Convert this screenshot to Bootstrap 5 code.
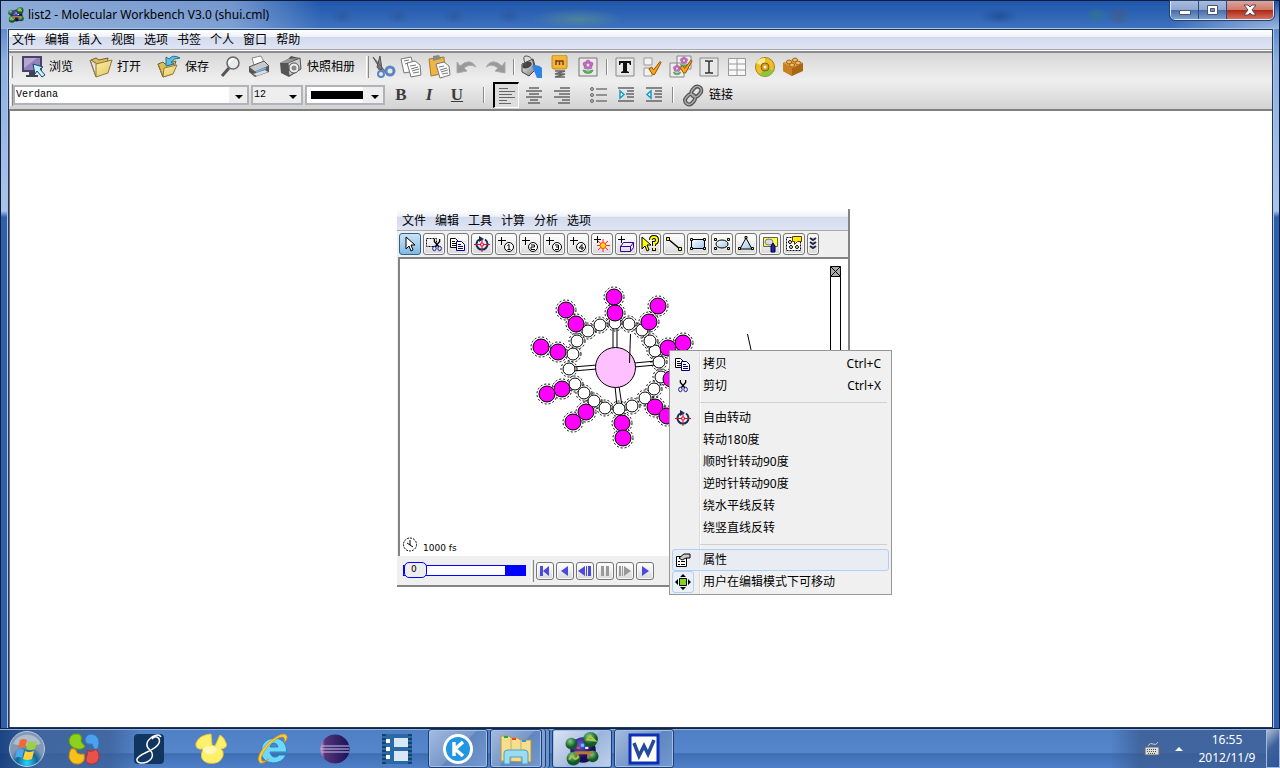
<!DOCTYPE html>
<html lang="zh-CN">
<head>
<meta charset="utf-8">
<meta name="viewport" content="width=device-width, initial-scale=1">
<title>list2 - Molecular Workbench V3.0 (shui.cml)</title>
<link href="https://cdn.jsdelivr.net/npm/bootstrap@5.3.0/dist/css/bootstrap.min.css" rel="stylesheet">
<style>
body{font:12px/16px "Noto Sans","Noto Sans CJK SC",sans-serif;color:#000;background:#2f62ae}
svg{display:block;flex:none}
a{color:#000;text-decoration:none}
button{font:inherit;color:#000;padding:0;border:0;background:none}
/* window frame */
.frame{background:linear-gradient(#3a6cb8 0,#8eb0e0 60px,#a9c4ea 210px,#2d60ac 216px,#2d60ac 100%);padding:0 6px 0 7px;border:solid #0b1a38;border-width:1px 1px 0}
.caption-bar{height:28px;margin:0 -6px 0 -7px;padding:0 5px 0 7px;
 background:
 radial-gradient(ellipse 12px 8px at 341px 15px,#2a5597aa,transparent),
 radial-gradient(ellipse 12px 8px at 397px 15px,#2a5597aa,transparent),
 radial-gradient(ellipse 12px 8px at 453px 15px,#2a5597aa,transparent),
 radial-gradient(ellipse 12px 8px at 508px 15px,#2a5597aa,transparent),
 radial-gradient(ellipse 46px 10px at 577px 18px,#5a8f8faa,transparent),
 radial-gradient(ellipse 20px 8px at 998px 15px,#1f4a90bb,transparent),
 radial-gradient(ellipse 12px 8px at 1096px 14px,#2f7a80aa,transparent),
 radial-gradient(ellipse 12px 10px at 1118px 15px,#4a5a78aa,transparent),
 radial-gradient(ellipse 110px 26px at 100% 100%,#9bb6df,transparent),
 linear-gradient(90deg,#a9c0e2cc 0,#a9c0e299 230px,transparent 320px),
 linear-gradient(#1f57ad,#3f72be)}
.client{border:1px solid #22375c;box-shadow:0 0 0 1px #a9c6ea}
.win-ctl{height:19px;border:1px solid #dfe8f5;border-top:0;border-radius:0 0 5px 5px;outline:1px solid #283f66;overflow:hidden}
.win-ctl button{width:28px;border-right:1px solid #2f4a78;background:linear-gradient(#a9bddd,#8ea8d2 48%,#486ea9 52%,#7d9fd0);display:flex;align-items:center;justify-content:center}
.win-ctl .x-btn{width:46px;border:0;background:linear-gradient(#dfa59b,#cf7a6c 48%,#ab2a16 52%,#d4705c)}
/* menus and tool bars */
.menu-strip{background:linear-gradient(#fff,#eef2f8 35%,#d3daed 38%,#dfe5f4)}
.app-menu{height:20px;padding:0 3px;gap:9px;border-bottom:1px solid #a8a8a8}
.tools{background:linear-gradient(#d8d8d8,#efefef 50%,#d3d3d3);border-top:2px solid #8c8c8c;border-bottom:2px solid #808080;padding:0 1px;margin-top:1px}
.tool-row{height:28px}
.grip{width:3px;height:22px;border-right:1px solid #888;border-left:1px solid #fff;background:#e0e0e0;flex:none}
.divide{width:9px;height:16px;flex:none;background:linear-gradient(90deg,transparent 4px,#8a8a8a 4px,#8a8a8a 5px,#fff 5px,#fff 6px,transparent 6px)}
.tool-row button{width:28px;height:26px;display:flex;align-items:center;justify-content:center;flex:none}
.tool-row .wide{width:auto;justify-content:flex-start;gap:4px;padding:0 8px 0 4px;white-space:nowrap}
.tool-row .album{padding:0 11px 0 6px}
.tool-row .letter{font:bold 17px "Liberation Serif",serif;color:#3c3c3c}
.tool-row .pressed{width:26px;margin:0 1px;border:1px solid #fff;border-top:2px solid #000;border-left:2px solid #000;background:#dedede}
.combo{height:20px;border:2px solid #b0b3b8;padding:0 0 0 1px;color:#000;font:10px/16px "Liberation Mono",monospace;appearance:none;border-radius:0;margin-right:2px;
 background:url("data:image/svg+xml,%3Csvg xmlns='http://www.w3.org/2000/svg' width='18' height='16'%3E%3Cpath fill='%23eee' d='M0 0h18v16H0z'/%3E%3Cpath d='M6 8h8l-4 4z'/%3E%3C/svg%3E") right center no-repeat,#fff}
.combo.face{width:236px}.combo.size{width:52px}
.combo.shade{width:80px;background:url("data:image/svg+xml,%3Csvg xmlns='http://www.w3.org/2000/svg' width='20' height='16'%3E%3Cpath fill='%23eee' d='M0 0h20v16H0z'/%3E%3Cpath d='M8 8h8l-4 4z'/%3E%3C/svg%3E") right center no-repeat,linear-gradient(#000,#000) 4px 4px/52px 8px no-repeat,#fff}
.combo.size{background-color:#eee}
/* document and embedded model */
.page-area{border-left:1px solid #777;background:#fff;padding:98px 0 0 387px}
.model{width:453px;border-right:2px solid #848484;border-bottom:2px solid #848484;background:#efefef;position:relative}
.model-menu{height:22px;padding:2px 5px 0;gap:9px;border-bottom:1px solid #aaa}
.model-tools{height:26px;padding:0 2px;gap:2px}
.model-tools button{width:22px;height:22px}
.key,.model-tools button{border:1px solid #777;border-radius:3px;background:linear-gradient(#fff,#eee 50%,#d9d9d9);box-shadow:inset 0 0 0 1px #f8f8f8;display:flex;align-items:center;justify-content:center;flex:none}
.model-tools button.chosen{background:linear-gradient(#c9e3f5,#a6d0ee 50%,#7fb9e2);border-color:#2c628b;box-shadow:none}
.model-tools button.more{width:12px}
.scene{background:#fff;border-top:2px solid #848484;border-left:2px solid #848484;margin-left:1px}
.player{height:29px;padding:0 6px;gap:2px}
.key{width:18px;height:18px}
.seek{width:123px;height:17px;position:relative;margin-right:3px}
.seek input{appearance:none;display:block;width:100%;height:17px;margin:0;background:linear-gradient(90deg,#fff 83%,#00f 83%) center/100% 10px no-repeat}
.seek input::-webkit-slider-runnable-track{height:11px;border:1px solid #00f}
.seek input::-webkit-slider-thumb{appearance:none;width:23px;height:16px;margin-top:-4px;border:1px solid #00f;border-radius:5px;background:#eee}
.seek output{position:absolute;left:8px;top:0;font:9px/15px "DejaVu Sans",sans-serif;pointer-events:none}
.scene text{font:9px "DejaVu Sans",sans-serif}
/* context menu */
.popup{position:absolute;left:272px;top:141px;width:223px;padding:2px 2px 1px;background:linear-gradient(90deg,#efefef 29px,#dcdcdc 29px,#dcdcdc 30px,#fff 30px,#fff 31px,#f0f0f0 31px);border:1px solid #979797;z-index:2}
.popup button{display:flex;align-items:center;width:100%;height:22px;text-align:left;border:1px solid transparent;padding-right:7px;border-radius:3px}
.popup .pic{width:20px;height:20px;display:flex;align-items:center;justify-content:center;margin-right:10px}
.popup .hot{border-color:#aecff7;background:#e6ecf5aa}
.popup .ticked .pic{outline:1px solid #aecff7;border-radius:2px;background:#e9f0f8}
.popup hr{margin:5px 2px 4px 28px;border-top:1px solid #d0d0d0;opacity:1}
/* task bar */
.taskbar{height:40px;border-top:1px solid #14233f;box-shadow:inset 0 1px #8fb2e2;
 background:linear-gradient(90deg,#0d3470cc 0,#3a5c90bb 40px,#3a5c90aa 110px,transparent 140px,transparent calc(100% - 170px),#38578aaa calc(100% - 140px),#38578aaa),linear-gradient(#4f80c5,#5586cb 60%,#3e6db1 64%,#4677bf 80%,#4f80c5)}
.taskbar button{height:39px;display:flex;align-items:center;justify-content:center;flex:none}
.pin{width:62px}
.first-pin{margin-left:10px}
.taskbar .task{width:60px;margin-right:2px;border:1px solid #1f3f74;border-radius:3px;box-shadow:inset 0 0 0 1px #a5c0e6;background:linear-gradient(135deg,#a3bce0,#7898c9 50%,#5f86bf 52%,#7599d0)}
.taskbar .task.front{background:linear-gradient(135deg,#dbe5f4,#aabfdf 50%,#9ab3da 52%,#c0d2ec)}
.taskbar .task.stack{width:52px;margin-right:10px;box-shadow:inset 0 0 0 1px #a5c0e6,3px 0 #7ea0d4,4px 0 #1f3f74,7px 0 #6e94cc,8px 0 #1f3f74}
.tray-arrow{width:27px;padding-left:9px}
.clock{color:#fff;line-height:18px;text-align:center;width:78px}
.taskbar .peek{width:14px;border:1px solid #9fb9de;background:linear-gradient(135deg,#aebed8,#40619a 45%,#2c5399)}
</style>
</head>
<body class="vh-100 d-flex flex-column overflow-hidden">
<svg width="0" height="0" class="position-absolute" aria-hidden="true">
<defs>
<linearGradient id="gold" x2="1" y2="1"><stop stop-color="#fff7b8"/><stop offset="1" stop-color="#e3c35c"/></linearGradient>
<linearGradient id="sky" x2="1" y2="1"><stop stop-color="#fff"/><stop offset="1" stop-color="#9cc5ea"/></linearGradient>
<linearGradient id="steel" y2="1" x2="1"><stop stop-color="#f4f4f4"/><stop offset="1" stop-color="#777"/></linearGradient>
<radialGradient id="ball" cx=".4" cy=".3"><stop stop-color="#82d286"/><stop offset="1" stop-color="#14572a"/></radialGradient>
<radialGradient id="nucleus" cx=".4" cy=".3"><stop stop-color="#6b58d8"/><stop offset="1" stop-color="#180c58"/></radialGradient>
<symbol id="molecule" viewBox="0 0 32 32"><circle cx="17" cy="17" r="12" fill="url(#nucleus)"/><circle cx="24" cy="7" r="7" fill="url(#ball)"/><circle cx="6" cy="11" r="5.500" fill="url(#ball)"/><circle cx="8" cy="25" r="6.500" fill="url(#ball)"/><circle cx="26" cy="23" r="5.500" fill="url(#ball)"/><path d="M9 18h17v3h-3v4h-2v-4h-8v3h-2v-3H9z" fill="#b4793b"/><path d="M11 14h3v2h-3z" fill="#e64a4a"/><path d="M15 11h3v3h-3z" fill="#55c8ee"/><path d="M19 14h3v2h-3z" fill="#eee"/><path d="M4 26q2-5 4-2t5-1M21 7l3-3 4 4z" stroke="#a9c645" stroke-width="2" fill="none"/></symbol>
<symbol id="tick" viewBox="0 0 16 16"><path d="M2 9l3-2 2 3 7-9 1 1L8 15H6z" fill="#ffa415" stroke="#8a4d00"/></symbol>
<symbol id="flower" viewBox="0 0 16 16"><g fill="#c66bc4" stroke="#974f98" stroke-width=".5"><circle cx="8" cy="3" r="2"/><circle cx="11" cy="5" r="2"/><circle cx="10" cy="8" r="2"/><circle cx="6" cy="8" r="2"/><circle cx="5" cy="5" r="2"/></g><circle cx="8" cy="6" r="1.500" fill="#f4d6f2"/><path d="M8 9v6M8 14q-4 1-5-3 4 0 5 3q1-3 5-3-1 4-5 3" fill="#57a860" stroke="#57a860"/></symbol>
<symbol id="pages" viewBox="0 0 16 16"><path d="M.5 2.500h5l3 3v6h-8z" fill="#fff" stroke="#000"/><path d="M2 5.500h3m-3 2h4m-4 2h4" stroke="#000"/><path d="M6.500 5.500h5l3 3v6h-8z" fill="#fff" stroke="#000080"/><path d="M8 8.500h3m-3 2h5m-5 2h5" stroke="#000080"/></symbol>
<symbol id="snip" viewBox="0 0 16 16"><path d="M5 1v3l5 6M11 1v3L6 10" stroke="#000" stroke-width="1.500" fill="none"/><ellipse cx="5" cy="12" rx="2" ry="2.500" fill="none" stroke="#00008b"/><ellipse cx="11" cy="12" rx="2" ry="2.500" fill="none" stroke="#00008b"/></symbol>
<symbol id="spin" viewBox="0 0 16 16"><path d="M11 3.500a5.500 5.500 0 1 1-6 0" fill="none" stroke="#0b2f5c" stroke-width="2"/><path d="M5 0l5 3-5 3z" fill="#0b2f5c"/><path d="M8 3v13M0 8.500h16" stroke="#e8002a" stroke-width="1"/><circle cx="8" cy="8.500" r="2" fill="#e8002a"/><circle cx="8" cy="8.500" r="1" fill="#fff"/></symbol>
</defs></svg>

<main class="frame flex-grow-1 d-flex flex-column">
<header class="caption-bar d-flex align-items-center flex-shrink-0">
<svg width="16" height="16"><use href="#molecule"/></svg>
<span class="ms-1">list2 - Molecular Workbench V3.0 (shui.cml)</span>
<div class="win-ctl d-flex ms-auto align-self-start">
<button aria-label="最小化"><svg width="14" height="12"><path d="M1.500 6.500h11v4h-11z" fill="#fff" stroke="#4a5568"/></svg></button>
<button aria-label="最大化"><svg width="13" height="12"><path d="M1.500 1.500h10v9h-10z" fill="#fff" stroke="#4a5568"/><path d="M4.500 4.500h4v3h-4z" fill="#7895c4" stroke="#4a5568"/></svg></button>
<button class="x-btn" aria-label="关闭"><svg width="14" height="12"><path d="M1 1h4l2 2 2-2h4L9 6l4 5H9L7 9l-2 2H1l4-5z" fill="#fff" stroke="#594552"/></svg></button>
</div>
</header>

<div class="client flex-grow-1 d-flex flex-column bg-white">
<nav class="menu-strip app-menu d-flex align-items-center"><a href="#">文件</a><a href="#">编辑</a><a href="#">插入</a><a href="#">视图</a><a href="#">选项</a><a href="#">书签</a><a href="#">个人</a><a href="#">窗口</a><a href="#">帮助</a></nav>
<div class="tools">
<div class="tool-row d-flex align-items-center">
<span class="grip me-1"></span>
<button class="wide me-1"><svg width="24" height="24"><path d="M1 1h20v16H1z" fill="#49416a"/><path d="M3 3h16v12H3z" fill="#9382b8"/><path d="M3 3h13L3 13z" fill="#b5a7d2"/><path d="M8 17h6v3h3v2H5v-2h3z" fill="#3e4256"/><path d="M12 9l10 3-3 2 5 6-3 2-5-6-2 3z" fill="#c4efff" stroke="#164766"/></svg>浏览</button>
<button class="wide me-1"><svg width="24" height="24"><path d="M2 5l5-2 3 2 9-2-2 12z" fill="#e0bd5b" stroke="#706130"/><path d="M1 5l6 17V9l16-4-4 13-12 4z" fill="url(#gold)" stroke="#8f7a3c"/></svg>打开</button>
<button class="wide"><svg width="24" height="24"><path d="M1 9l5-2 2 2 11-3-4 13-9 3z" fill="#e0bd5b" stroke="#706130"/><path d="M1 9l5 13 1-9 13-3-4 9-10 3z" fill="url(#gold)" stroke="#8f7a3c"/><path d="M23 3Q16-1 12 4L9 2v9l8-2-3-2q3-4 9-4z" fill="#62bde4" stroke="#237193"/></svg>保存</button>
<button aria-label="查找"><svg width="24" height="24"><path d="M10 13l-7 8" stroke="#555" stroke-width="3"/><circle cx="14" cy="8" r="6" fill="#e6edf1" stroke="#666" stroke-width="1.500"/><path d="M10 8q1-4 5-4" stroke="#fff" stroke-width="2" fill="none"/></svg></button>
<button aria-label="打印"><svg width="24" height="24"><path d="M7 10L5 3l9-2 4 8z" fill="#fff" stroke="#888"/><path d="M2 12l15-6 5 5v6L8 22l-6-5z" fill="#555"/><path d="M2 12l15-6 5 5-14 6z" fill="#c9c9c9" stroke="#555"/><path d="M9 17l10-4" stroke="#6ab0de" stroke-width="2"/><path d="M6 19l12-4 3 2-11 4z" fill="#ddd"/></svg></button>
<button class="wide album"><svg width="24" height="24"><path d="M1 8l8-4 3-3 4 1 5 1 1 11L10 22 2 18z" fill="#555"/><path d="M9 8l12-5 1 11-12 7z" fill="#ccc" stroke="#555"/><path d="M1 8l8-4 10-1L9 8z" fill="#999"/><circle cx="15" cy="13" r="5" fill="#eee" stroke="#555"/><circle cx="15" cy="13" r="2.500" fill="#888"/></svg>快照相册</button>
<span class="grip"></span>
<button aria-label="剪切"><svg width="26" height="24"><path d="M3 2l12 14-3 1zM10 1l2 13-2 2-3-4z" fill="#888" stroke="#555"/><circle cx="11" cy="19" r="3" fill="none" stroke="#5d86c4" stroke-width="2"/><circle cx="20" cy="16" r="4" fill="none" stroke="#5d86c4" stroke-width="3"/></svg></button>
<button aria-label="复制"><svg width="24" height="24"><path d="M2 4l10-2 4 14-11 2z" fill="#fff" stroke="#777"/><path d="M8 8l8-2 5 4 1 10-10 2z" fill="#fff" stroke="#777"/><path d="M5 6l5-1M6 9l3-1M11 11l6-1m-5 4l7-2m-6 4l7-2m-6 4l6-1" stroke="#777"/></svg></button>
<button aria-label="粘贴"><svg width="24" height="24"><path d="M2 4l15-2 1 16-14 3z" fill="#f0b548" stroke="#ac7824"/><path d="M6 1l6-1 2 4-8 2z" fill="#888"/><path d="M9 9l8-2 5 4 1 9-10 3z" fill="#fff" stroke="#777"/><path d="M12 12l5-1m-4 4l7-2m-6 4l7-2m-6 4l6-1" stroke="#777"/></svg></button>
<button aria-label="撤消"><svg width="22" height="18"><path d="M1 4v11l10-2-3-3q6-5 12-1Q14-1 4 8z" fill="#999" stroke="#aaa"/></svg></button>
<button aria-label="重做"><svg width="22" height="18"><path d="M21 4v11l-10-2 3-3Q8 5 2 9 8-1 18 8z" fill="#999" stroke="#aaa"/></svg></button>
<span class="divide"></span>
<button aria-label="填充颜色"><svg width="26" height="24"><path d="M3 9l11-5 3 10-7 7-7-4z" fill="url(#steel)" stroke="#444"/><ellipse cx="8" cy="10" rx="5" ry="3" transform="rotate(-25 8 10)" fill="#444"/><path d="M7 10Q2 0 8 1t7 10" fill="none" stroke="#555"/><path d="M13 11q7-2 10 2v10h-5z" fill="#2d84e4"/></svg></button>
<button aria-label="模型"><svg width="20" height="24"><rect x="2" y="0" width="15" height="14" rx="2" fill="#f2b739" stroke="#c48819"/><path d="M6 10V5m0 1h7v4M9.500 6v4" stroke="#7d3d22" stroke-width="1.500" fill="none"/><path d="M5 16h10L5 19h10L5 22h10" stroke="#666" stroke-width="1.500" fill="none"/></svg></button>
<button aria-label="图片"><svg width="20" height="20"><path d="M1 1h18v18H1z" fill="#e9e9e9" stroke="#777"/><use href="#flower" x="2" y="2" width="16" height="16"/></svg></button>
<span class="divide"></span>
<button aria-label="文本框"><svg width="20" height="20"><path d="M1 1h18v18H1z" fill="#e8e8e8" stroke="#888"/><path d="M4 4h12v4h-1l-1-2h-2v8l2 1v1H6v-1l2-1V6H6L5 8H4z" fill="#111"/></svg></button>
<button aria-label="复选框"><svg width="20" height="20"><path d="M1 1h8v7H1zM1 11h8v8H1z" fill="#f3f3f3" stroke="#999"/><use href="#tick" x="4" y="3" width="15" height="16"/></svg></button>
<button aria-label="图片选项"><svg width="24" height="24"><path d="M8 1h14v13H8zM1 8h14v14H1z" fill="#eee" stroke="#888"/><use href="#flower" x="9" y="1" width="12" height="12"/><use href="#flower" x="2" y="9" width="12" height="12"/><use href="#tick" x="9" y="3" width="15" height="17"/></svg></button>
<button aria-label="输入框"><svg width="20" height="20"><path d="M1 1h18v18H1z" fill="#e8e8e8" stroke="#888"/><path d="M6 4h3l1 1 1-1h3M10 5v10M6 16h3l1-1 1 1h3" stroke="#333" fill="none" stroke-width="1.500"/></svg></button>
<button aria-label="表格"><svg width="20" height="20"><path d="M1.500 1.500h17v17h-17zM10 1v18M1 7h18M1 13h18" fill="#f8f8f8" stroke="#999"/></svg></button>
<button aria-label="光盘"><svg width="22" height="22"><circle cx="11" cy="11" r="9.500" fill="#eebf24" stroke="#a67d1c"/><path d="M11 11L2 7a10 10 0 0 1 9-5z" fill="#f5e98c"/><path d="M11 11l9 4a10 10 0 0 1-14 4z" fill="#8cc43e"/><circle cx="11" cy="11" r="4" fill="#d79e1d" stroke="#875e12"/><circle cx="11" cy="11" r="1.500" fill="#fff"/></svg></button>
<button aria-label="组件"><svg width="22" height="22"><path d="M1 7l11-4 9 4v8l-11 5-9-5z" fill="#a96713"/><path d="M1 7l11-4 9 4-11 5z" fill="#e0a74f"/><path d="M10 12v8l-9-5V7z" fill="#c98022"/><g fill="#efbb66" stroke="#9d641c"><ellipse cx="7" cy="6" rx="2.500" ry="2"/><ellipse cx="13" cy="4" rx="2.500" ry="2"/><ellipse cx="10" cy="9" rx="2.500" ry="2"/><ellipse cx="16" cy="7" rx="2.500" ry="2"/></g></svg></button>
</div>
<div class="tool-row d-flex align-items-center">
<span class="grip"></span>
<select class="combo face" aria-label="字体"><option>Verdana</option></select>
<select class="combo size" aria-label="字号"><option>12</option></select>
<select class="combo shade" aria-label="颜色"><option></option></select>
<button class="letter" aria-label="粗体">B</button><button class="letter fst-italic" aria-label="斜体">I</button><button class="letter text-decoration-underline" aria-label="下划线">U</button>
<span class="divide ms-2 me-1"></span>
<button class="pressed" aria-label="左对齐"><svg width="18" height="18"><path d="M1 1.500h9M1 4.500h16M1 7.500h13M1 10.500h16M1 13.500h8M1 16.500h12" stroke="#666"/></svg></button>
<button aria-label="居中"><svg width="18" height="18"><path d="M4 2h10M1 5h16M4 8h10M1 11h16M5 14h8M3 17h12" stroke="#666" stroke-width="1.500"/></svg></button>
<button aria-label="右对齐" class="me-2"><svg width="18" height="18"><path d="M7 2h10M1 5h16M6 8h11M1 11h16M9 14h8M5 17h12" stroke="#666" stroke-width="1.500"/></svg></button>
<button aria-label="项目符号"><svg width="18" height="18"><g fill="#bbb" stroke="#666"><circle cx="3" cy="3" r="1.500"/><circle cx="3" cy="9" r="1.500"/><circle cx="3" cy="15" r="1.500"/></g><path d="M7 3h11M7 9h11M7 15h11" stroke="#777" stroke-width="1.500"/></svg></button>
<button aria-label="增加缩进"><svg width="18" height="18"><path d="M1 2h16M10 5h7M9 8h8M10 11h7M1 15h16" stroke="#666" stroke-width="1.500"/><path d="M3 5v7l4-3.500z" fill="#fff" stroke="#139bc8" stroke-width="1.500"/></svg></button>
<button aria-label="减少缩进"><svg width="18" height="18"><path d="M1 2h16M10 5h7M9 8h8M10 11h7M1 15h16" stroke="#666" stroke-width="1.500"/><path d="M6 5v7L2 8.500z" fill="#fff" stroke="#139bc8" stroke-width="1.500"/></svg></button>
<span class="divide"></span>
<button class="wide"><svg width="24" height="24"><g fill="none" stroke="#555" stroke-width="4"><rect x="11" y="3" width="8" height="11" rx="4" transform="rotate(42 15 9)"/><rect x="5" y="10" width="8" height="11" rx="4" transform="rotate(42 8 16)"/></g><g fill="none" stroke="#aaa" stroke-width="1.500"><rect x="11" y="3" width="8" height="11" rx="4" transform="rotate(42 15 9)"/><rect x="5" y="10" width="8" height="11" rx="4" transform="rotate(42 8 16)"/></g></svg>链接</button>
</div>
</div>

<div class="page-area flex-grow-1">
<section class="model">
<nav class="menu-strip model-menu d-flex align-items-center"><a href="#">文件</a><a href="#">编辑</a><a href="#">工具</a><a href="#">计算</a><a href="#">分析</a><a href="#">选项</a></nav>
<div class="model-tools d-flex align-items-center">
<button class="chosen" aria-label="选择"><svg width="16" height="16"><path d="M4 1v12l3-3 2 5 2-1-2-5h4z" fill="#fff" stroke="#000"/></svg></button>
<button aria-label="框选剪切"><svg width="18" height="16"><path d="M1.500 2.500h10v8h-10z" fill="none" stroke="#000" stroke-dasharray="2 1"/><use href="#snip" x="5" y="2" width="14" height="14"/></svg></button>
<button aria-label="复制"><svg width="16" height="16"><use href="#pages"/></svg></button>
<button aria-label="转动"><svg width="16" height="16"><use href="#spin"/></svg></button>
<button aria-label="添加原子 1"><svg width="18" height="18"><path d="M1 5.500h8M4.500 2v8" stroke="#000"/><circle cx="12" cy="12" r="4.500" fill="#fff" stroke="#000"/><path d="M10.500 10.500l1.500-1v5m-1.500 0h3" fill="none" stroke="#000"/></svg></button>
<button aria-label="添加原子 2"><svg width="18" height="18"><path d="M1 5.500h8M4.500 2v8" stroke="#000"/><circle cx="12" cy="12" r="4.500" fill="#fff" stroke="#000"/><path d="M10 10h3.500v2H10v2.500h4" fill="none" stroke="#000"/></svg></button>
<button aria-label="添加原子 3"><svg width="18" height="18"><path d="M1 5.500h8M4.500 2v8" stroke="#000"/><circle cx="12" cy="12" r="4.500" fill="#fff" stroke="#000"/><path d="M10 10h3.500v4.500H10m1-2.500h3" fill="none" stroke="#000"/></svg></button>
<button aria-label="添加原子 4"><svg width="18" height="18"><path d="M1 5.500h8M4.500 2v8" stroke="#000"/><circle cx="12" cy="12" r="4.500" fill="#fff" stroke="#000"/><path d="M13 15V9.500l-3 3.500h5" fill="none" stroke="#000"/></svg></button>
<button aria-label="光源"><svg width="18" height="18"><path d="M1 4.500h7M4.500 1v7" stroke="#000"/><path d="M10 4v13M4 10.500h13M5 6l10 9M15 6L5 15" stroke="#f22"/><circle cx="10" cy="10.500" r="3" fill="#fd0" stroke="#f44"/></svg></button>
<button aria-label="添加盒子"><svg width="18" height="18"><path d="M1 4.500h7M4.500 1v7" stroke="#000"/><path d="M3.500 11.500l3-4h10v5l-3 4h-10zM3 11.500h10.500v5m0-5l3-4" fill="none" stroke="#3b009e"/></svg></button>
<button aria-label="帮助"><svg width="18" height="18"><path d="M1 2v12l3-3 2 5 2-1-2-5h4z" fill="#ff0" stroke="#000"/><path d="M10 5q0-3 3-3t3 3-3 3v3M13 13v3" fill="none" stroke="#000" stroke-width="4"/><path d="M10 5q0-3 3-3t3 3-3 3v3M13 13v2" fill="none" stroke="#ff0" stroke-width="2"/></svg></button>
<button aria-label="直线"><svg width="18" height="18"><path d="M3 4l12 10" stroke="#000" stroke-width="1.500"/><path d="M1.500 2.500h3v3h-3zM13.500 12.500h3v3h-3z" fill="#ff0" stroke="#000"/></svg></button>
<button aria-label="矩形"><svg width="18" height="18"><path d="M2.500 4.500h13v9h-13z" fill="url(#sky)" stroke="#000"/><path d="M1.500 3.500h2v2h-2zM14.500 3.500h2v2h-2zM1.500 12.500h2v2h-2zM14.500 12.500h2v2h-2z" fill="#ff0" stroke="#000"/></svg></button>
<button aria-label="椭圆"><svg width="18" height="18"><ellipse cx="9" cy="9" rx="6" ry="4" fill="url(#sky)" stroke="#000"/><path d="M1.500 3.500h2v2h-2zM14.500 3.500h2v2h-2zM1.500 12.500h2v2h-2zM14.500 12.500h2v2h-2z" fill="#ff0" stroke="#000"/></svg></button>
<button aria-label="三角形"><svg width="18" height="18"><path d="M9 3l6 11H3z" fill="url(#sky)" stroke="#000"/><path d="M8 1.500h2v2H8zM1.500 12.500h2v2h-2zM14.500 12.500h2v2h-2z" fill="#ff0" stroke="#000"/></svg></button>
<button aria-label="填充"><svg width="18" height="18"><path d="M2.500 2.500h14v9h-14z" fill="#ff3" stroke="#665"/><ellipse cx="8" cy="7" rx="4" ry="3" fill="#d8d8f4" stroke="#77a"/><path d="M10 11l2-3 2 3v6h-4z" fill="#22a" stroke="#003"/></svg></button>
<button aria-label="注释"><svg width="18" height="18"><path d="M1.500 2.500h14v13h-14z" fill="#fff" stroke="#000" stroke-dasharray="2 1"/><circle cx="5" cy="7" r="1.500" fill="none" stroke="#000"/><circle cx="6" cy="12" r="1.500" fill="none" stroke="#000"/><circle cx="12" cy="12" r="1.500" fill="none" stroke="#000"/><path d="M7.500 1.500h9v5h-4l-3 3v-3h-2z" fill="#fe0" stroke="#630"/></svg></button>
<button class="more" aria-label="更多"><svg width="8" height="14"><path d="M1 1l3 2 3-2M1 5l3 2 3-2M1 9l3 2 3-2" fill="none" stroke="#224" stroke-width="2"/></svg></button>
</div>
<div class="scene overflow-hidden">
<svg id="view" width="448" height="297" viewBox="400 259 448 297" role="img" aria-label="分子模型">
<g fill="none" stroke="#000"><path d="M613 327v22M617 327v22M573 367l24-2M573 371l24-2M634 363l22-2M634 367l22-2M615 386l2 20M619 386l3 20"/><circle cx="615.500" cy="367.500" r="20" fill="#ffc0ff"/><path d="M630.500 334l-1 29M747.500 334l4 18"/>
<path d="M830.500 277v270h10V277" fill="#fff"/><path d="M830.500 266.500h10v10h-10zl10 10m0-10l-10 10" fill="#aaa"/></g>
<g id="atoms" stroke="#000"></g>
<circle cx="410" cy="544.500" r="6.500" fill="#fff" stroke="#000" stroke-dasharray="2 1"/><path d="M410 540v5l3 2m-3-2l-3-2" stroke="#000" fill="none"/>
<text x="423" y="551">1000 fs</text>
</svg>
</div>
<div class="player d-flex align-items-center">
<div class="seek"><input type="range" min="0" max="100" value="0" aria-label="时间"><output>0</output></div>
<span class="grip"></span>
<button class="key" aria-label="回到开头"><svg width="12" height="12"><path d="M1 1h3v10H1zM10 1v10L4 6z" fill="#4a4ae0"/></svg></button>
<button class="key" aria-label="后退"><svg width="12" height="12"><path d="M9 1v10L2 6z" fill="#4a4ae0"/></svg></button>
<button class="key" aria-label="后退一步"><svg width="14" height="12"><path d="M7 1v10L0 6zM8 1h1v10H8zM10 1h3v10h-3z" fill="#4a4ae0"/></svg></button>
<button class="key" aria-label="暂停"><svg width="12" height="12"><path d="M2 1h3v10H2zM7 1h3v10H7z" fill="#999"/></svg></button>
<button class="key" aria-label="前进一步"><svg width="14" height="12"><path d="M1 1h2v10H1zM4 1h1v10H4zM6 1v10l7-5z" fill="#999"/></svg></button>
<button class="key" aria-label="播放"><svg width="12" height="12"><path d="M3 1v10l7-5z" fill="#4a4ae0"/></svg></button>
</div>

<div class="popup" role="menu">
<button role="menuitem"><span class="pic"><svg width="16" height="16"><use href="#pages"/></svg></span>拷贝<span class="ms-auto">Ctrl+C</span></button>
<button role="menuitem"><span class="pic"><svg width="14" height="16"><use href="#snip"/></svg></span>剪切<span class="ms-auto">Ctrl+X</span></button>
<hr>
<button role="menuitem"><span class="pic"><svg width="16" height="16"><use href="#spin"/></svg></span>自由转动</button>
<button role="menuitem"><span class="pic"></span>转动180度</button>
<button role="menuitem"><span class="pic"></span>顺时针转动90度</button>
<button role="menuitem"><span class="pic"></span>逆时针转动90度</button>
<button role="menuitem"><span class="pic"></span>绕水平线反转</button>
<button role="menuitem"><span class="pic"></span>绕竖直线反转</button>
<hr>
<button role="menuitem" class="hot"><span class="pic"><svg width="16" height="16"><path d="M1.500 4.500h10v10h-10z" fill="#fff" stroke="#000"/><path d="M3 9.500h2m1 0h4M3 12.500h2m1 0h4" stroke="#000"/><path d="M4 6l5-4h6v4h-4L7 8z" fill="#ccc" stroke="#000"/></svg></span>属性</button>
<button role="menuitemcheckbox" aria-checked="true" class="ticked"><span class="pic"><svg width="16" height="16"><path d="M8 0l3 3H5zM8 16l3-3H5zM0 8l3-3v6zM16 8l-3-3v6z"/><path d="M4.500 4.500h7v7h-7z" fill="#7fd61a" stroke="#000"/></svg></span>用户在编辑模式下可移动</button>
</div>
</section>
</div>
</div>
</main>

<footer class="taskbar d-flex flex-shrink-0">
<button class="ps-2" aria-label="开始"><svg width="38" height="38"><defs><radialGradient id="orb" cy=".9"><stop stop-color="#20d8ff"/><stop offset=".6" stop-color="#146596"/><stop offset="1" stop-color="#8299b5"/></radialGradient></defs><circle cx="19" cy="19" r="17.500" fill="url(#orb)" stroke="#b9cade"/><path d="M5 14a15 15 0 0 1 28 0q-14 4-28 0z" fill="#fff" opacity=".35"/><path d="M12 10q4-2 7 0l-2 8q-3-2-7 0z" fill="#f06a31"/><path d="M20 11q4 2 9 0l-2 8q-5 2-9 0z" fill="#9bd044"/><path d="M9 20q4-2 7 0l-2 8q-4-2-7 0z" fill="#4aa8ef"/><path d="M17 21q4 2 9 0l-2 8q-5 2-9 0z" fill="#ffd13b"/></svg></button>
<button class="pin first-pin" aria-label="四叶"><svg width="32" height="32" viewBox="4 0 32 32" overflow="visible"><path d="M7 1h5q4 3 2 7 2 4 4 5-2 4-8 3-8-2-8-9 1-5 5-6z" fill="#8cd11c" stroke="#5da007"/><path d="M24 1q8 1 8 9 0 5-3 7-3-2-4-6-5 1-7-3 0-6 6-7z" fill="#4ba1ee" stroke="#2f79c4"/><path d="M4 16q3-1 5 1 0 5 8 4 2 8-5 10-8 1-10-7 0-5 2-8z" fill="#f8c119" stroke="#c98612"/><path d="M20 17q4 3 9-1 4 4 3 9-2 7-9 6-5-1-4-6 2-4 1-8z" fill="#e8524a" stroke="#ad2e2e"/></svg></button>
<button class="pin" aria-label="数字 8"><svg width="32" height="32"><rect x="1" y="1" width="30" height="30" rx="4" fill="#10365f"/><path d="M28 4Q26 0 19 4c-7 5-6 10-2 13 4 4 3 9-3 12-5 2-11 1-10-3 2-6 19-8 22-16 2-6-4-8-7-4" fill="none" stroke="#fff" stroke-width="1.500"/></svg></button>
<button class="pin" aria-label="黄色小鸟"><svg width="32" height="32"><path d="M17 12L16 1Q4 2 1 10q-1 7 7 6-5 11 5 14 12 2 15-7 1-5-2-7 7-1 5-6-2-6-6-8l-5 11z" fill="#fff06b" stroke="#e7c83b"/><ellipse cx="15" cy="17" rx="7" ry="4" fill="#fff8b4"/></svg></button>
<button class="pin" aria-label="浏览器"><svg width="32" height="32"><path d="M29 22q-4 8-13 8Q4 29 4 18 5 6 17 5q12 0 13 14H13q1 5 5 5 3 0 4-2zM13 14h8q-1-4-4-4t-4 4z" fill="#70d6fa" stroke="#2286bd"/><path d="M3 30Q-3 24 12 9 27-3 30 3q1 3-3 7 2-6-2-6-5 0-14 9-9 11-6 15 3 1 7-2-6 5-9 4z" fill="#ffcf33" stroke="#d99313" stroke-width=".7"/></svg></button>
<button class="pin" aria-label="开发工具"><svg width="32" height="32"><defs><linearGradient id="ecl"><stop stop-color="#e397d0"/><stop offset=".15" stop-color="#54347a"/><stop offset="1" stop-color="#1d1157"/></linearGradient></defs><circle cx="16" cy="16" r="14.500" fill="url(#ecl)"/><path d="M3 13h27M2 16h28M3 19h27" stroke="#c3c6ec"/></svg></button>
<button class="pin" aria-label="影片"><svg width="32" height="32"><path d="M1 1h30v30H1z" fill="#2a68a6"/><path d="M3 1v30M29 1v30" stroke="#15436f" stroke-width="4" stroke-dasharray="2 2"/><path d="M13 5h14v9H13zM13 18h14v10H13z" fill="#d9e8f7"/><path d="M5 6h4v4H5zM5 14h4v4H5zM5 22h4v4H5z" fill="#fff"/></svg></button>
<button class="task" aria-label="K"><svg width="32" height="32"><circle cx="16" cy="16" r="13.500" fill="#2196e3" stroke="#fff" stroke-width="3"/><path d="M12 9v14M21 9l-8 7 8 7" stroke="#fff" stroke-width="3.500" fill="none"/></svg></button>
<button class="task stack" aria-label="资源管理器"><svg width="34" height="32"><path d="M2 28V3h8l2 2h7l2 2h11v22z" fill="#f5df8e" stroke="#b99540"/><path d="M12 28V6M22 28V8" stroke="#cfae5a"/><path d="M5 3h4v2H5z" fill="#2a4"/><path d="M13 5h4v2h-4z" fill="#e43"/><path d="M23 7h4v2h-4z" fill="#29e"/><path d="M5 20q0-3 4-3h16q4 0 4 3v11h-6v-7H11v7H5z" fill="#9cdcf2" stroke="#4aa0c6"/></svg></button>
<button class="task front" aria-label="Molecular Workbench"><svg width="34" height="34"><use href="#molecule"/></svg></button>
<button class="task" aria-label="文字处理"><svg width="32" height="32"><path d="M2 2h28v28H2z" fill="#fff" stroke="#0c2eb8" stroke-width="3"/><path d="M6 10l5 13 5-10 4 8 6-14" fill="none" stroke="#244c9c" stroke-width="3.500"/></svg></button>
<div class="d-flex align-items-center ms-auto">
<button aria-label="键盘"><svg width="18" height="18"><path d="M5 6q2-4 5-2t5-2" fill="none" stroke="#ccc"/><path d="M2 7h14v8H2z" fill="#ddd" stroke="#666"/><path d="M4 9.500h10M4 11.500h10M5 13.500h8" stroke="#555" stroke-dasharray="1 1"/></svg></button>
<button class="tray-arrow" aria-label="显示隐藏的图标"><svg width="8" height="6"><path d="M0 5l4-4 4 4z" fill="#fff"/></svg></button>
<div class="clock">16:55<br>2012/11/9</div>
<button class="peek" aria-label="显示桌面"></button>
</div>
</footer>
<script>
// Ring atoms, then the paired side atoms: [x, y]
const ring=[[615,323],[600,325],[588,331],[577,341],[573,354],[569,369],[575,384],[584,393],[594,401],[605,408],[619,409],[632,406],[645,398],[654,389],[661,377],[659,362],[655,351],[650,341],[642,330],[629,324]];
const side=[[614,297],[615,313],[658,306],[649,322],[683,343],[668,348],[576,324],[566,310],[541,347],[558,352],[562,389],[547,394],[586,412],[573,422],[622,423],[623,438],[655,407],[667,416],[671,379]];
const disc=(r,fill,extra="")=>([x,y])=>`<circle cx="${x}" cy="${y}" r="${r}" fill="${fill}" ${extra}/>`;
document.getElementById("atoms").innerHTML=
 ring.map(disc(8,"none",'stroke-dasharray="2 2"')).join("")+side.map(disc(10,"none",'stroke-dasharray="2 2"')).join("")+
 ring.map(disc(6,"#fff")).join("")+side.map(disc(8,"#f0f")).join("");
</script>
<script src="https://cdn.jsdelivr.net/npm/bootstrap@5.3.0/dist/js/bootstrap.bundle.min.js"></script>
</body>
</html>
